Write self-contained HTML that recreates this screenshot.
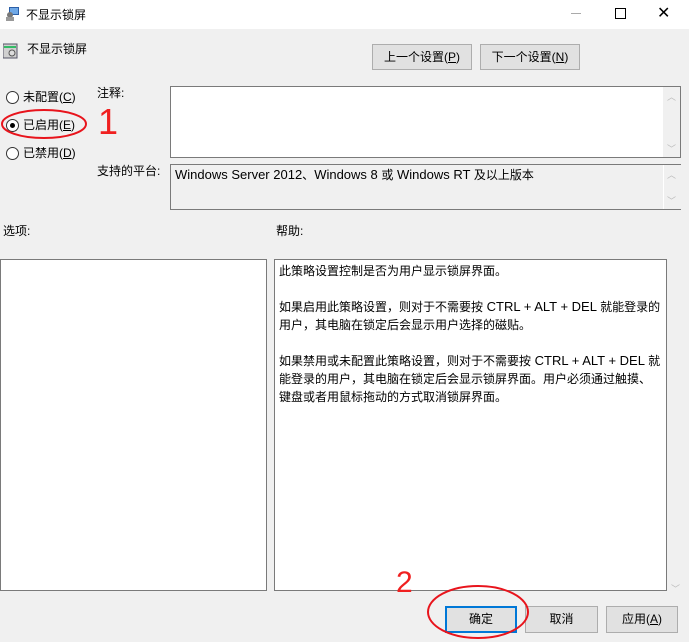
<html><head><style>
body{margin:0;width:689px;height:642px;background:#f0f0f0;font-family:"Liberation Sans","Noto Sans CJK SC",sans-serif;font-size:12px;color:#000;position:relative;overflow:hidden}
.a{position:absolute}
.l{font-size:13px}
.btn{position:absolute;background:#e1e1e1;border:1px solid #adadad;box-sizing:border-box;text-align:center;line-height:24px}
.box{position:absolute;background:#fff;border:1px solid #7a7a7a;box-sizing:border-box}
.rad{position:absolute;width:11px;height:11px;border:1px solid #333;border-radius:50%;background:#fff}
.chev{position:absolute;color:#bbb;font-size:9px}
u{text-decoration:underline}
</style></head><body>
<div class="a" style="left:0;top:0;width:689px;height:29px;background:#fff"></div>
<svg class="a" style="left:5px;top:6px" width="16" height="16"><rect x="4" y="1" width="10" height="8" fill="#2b5fa8"/><rect x="5" y="2" width="8" height="6" fill="#6fa8e6"/><circle cx="5" cy="9" r="3" fill="#777"/><rect x="1" y="11" width="8" height="4" fill="#999"/></svg>
<div class="a" style="left:26px;top:6px">不显示锁屏</div>
<div class="a" style="left:571px;top:13px;width:10px;height:1px;background:#aaa"></div>
<div class="a" style="left:615px;top:8px;width:9px;height:9px;border:1px solid #000"></div>
<div class="a" style="left:657px;top:3px;font-size:16px">✕</div>
<svg class="a" style="left:3px;top:43px" width="16" height="16"><rect x="0" y="1" width="14" height="14" fill="#d0d0d0" stroke="#556"/><rect x="1" y="3" width="12" height="2" fill="#3b6"/><circle cx="9" cy="10" r="3" fill="#ddd" stroke="#555"/></svg>
<div class="a" style="left:27px;top:40px">不显示锁屏</div>
<div class="btn" style="left:372px;top:44px;width:100px;height:26px">上一个设置(<u>P</u>)</div>
<div class="btn" style="left:480px;top:44px;width:100px;height:26px">下一个设置(<u>N</u>)</div>
<div class="rad" style="left:6px;top:91px"></div><div class="a" style="left:23px;top:88px">未配置(<u>C</u>)</div>
<div class="rad" style="left:6px;top:119px"></div><div class="a" style="left:10px;top:123px;width:5px;height:5px;border-radius:50%;background:#000"></div><div class="a" style="left:23px;top:116px">已启用(<u>E</u>)</div>
<div class="rad" style="left:6px;top:147px"></div><div class="a" style="left:23px;top:144px">已禁用(<u>D</u>)</div>
<div class="a" style="left:97px;top:84px">注释:</div>
<div class="a" style="left:97px;top:162px">支持的平台:</div>
<div class="box" style="left:170px;top:86px;width:511px;height:72px"></div>
<div class="a" style="left:663px;top:87px;width:17px;height:70px;background:#f0f0f0"></div>
<div class="chev" style="left:667px;top:90px">︿</div><div class="chev" style="left:667px;top:142px">﹀</div>
<div class="box" style="left:170px;top:164px;width:511px;height:46px;background:#f0f0f0"></div>
<div class="a" style="left:663px;top:165px;width:17px;height:44px;background:#f0f0f0;border-left:1px solid #fff"></div>
<div class="chev" style="left:667px;top:168px">︿</div><div class="chev" style="left:667px;top:194px">﹀</div>
<div class="a" style="left:175px;top:166px"><span class="l">Windows Server 2012</span>、<span class="l">Windows 8 </span>或<span class="l"> Windows RT </span>及以上版本</div>
<div class="a" style="left:3px;top:222px">选项:</div>
<div class="a" style="left:276px;top:222px">帮助:</div>
<div class="box" style="left:0;top:259px;width:267px;height:332px"></div>
<div class="box" style="left:274px;top:259px;width:393px;height:332px;padding:2px 3px 3px 4px;line-height:18px;white-space:nowrap;overflow:hidden">此策略设置控制是否为用户显示锁屏界面。<br><br>如果启用此策略设置，则对于不需要按<span class="l"> CTRL + ALT + DEL </span>就能登录的<br>用户，其电脑在锁定后会显示用户选择的磁贴。<br><br>如果禁用或未配置此策略设置，则对于不需要按<span class="l"> CTRL + ALT + DEL </span>就<br>能登录的用户，其电脑在锁定后会显示锁屏界面。用户必须通过触摸、<br>键盘或者用鼠标拖动的方式取消锁屏界面。</div>
<div class="chev" style="left:671px;top:582px">﹀</div>
<div class="btn" style="left:445px;top:606px;width:72px;height:27px;border:2px solid #0078d7;line-height:23px">确定</div>
<div class="btn" style="left:525px;top:606px;width:73px;height:27px">取消</div>
<div class="btn" style="left:606px;top:606px;width:72px;height:27px">应用(<u>A</u>)</div>
<svg class="a" style="left:0;top:0" width="689" height="642">
<ellipse cx="44" cy="124" rx="42" ry="14" fill="none" stroke="#e8141c" stroke-width="2"/>
<ellipse cx="478" cy="612" rx="50" ry="26" fill="none" stroke="#e8141c" stroke-width="2"/>
<text x="98" y="134" font-family="Liberation Sans" font-size="36" fill="#f02020">1</text>
<text x="396" y="592" font-family="Liberation Sans" font-size="30" fill="#f02020">2</text>
</svg>
</body></html>
